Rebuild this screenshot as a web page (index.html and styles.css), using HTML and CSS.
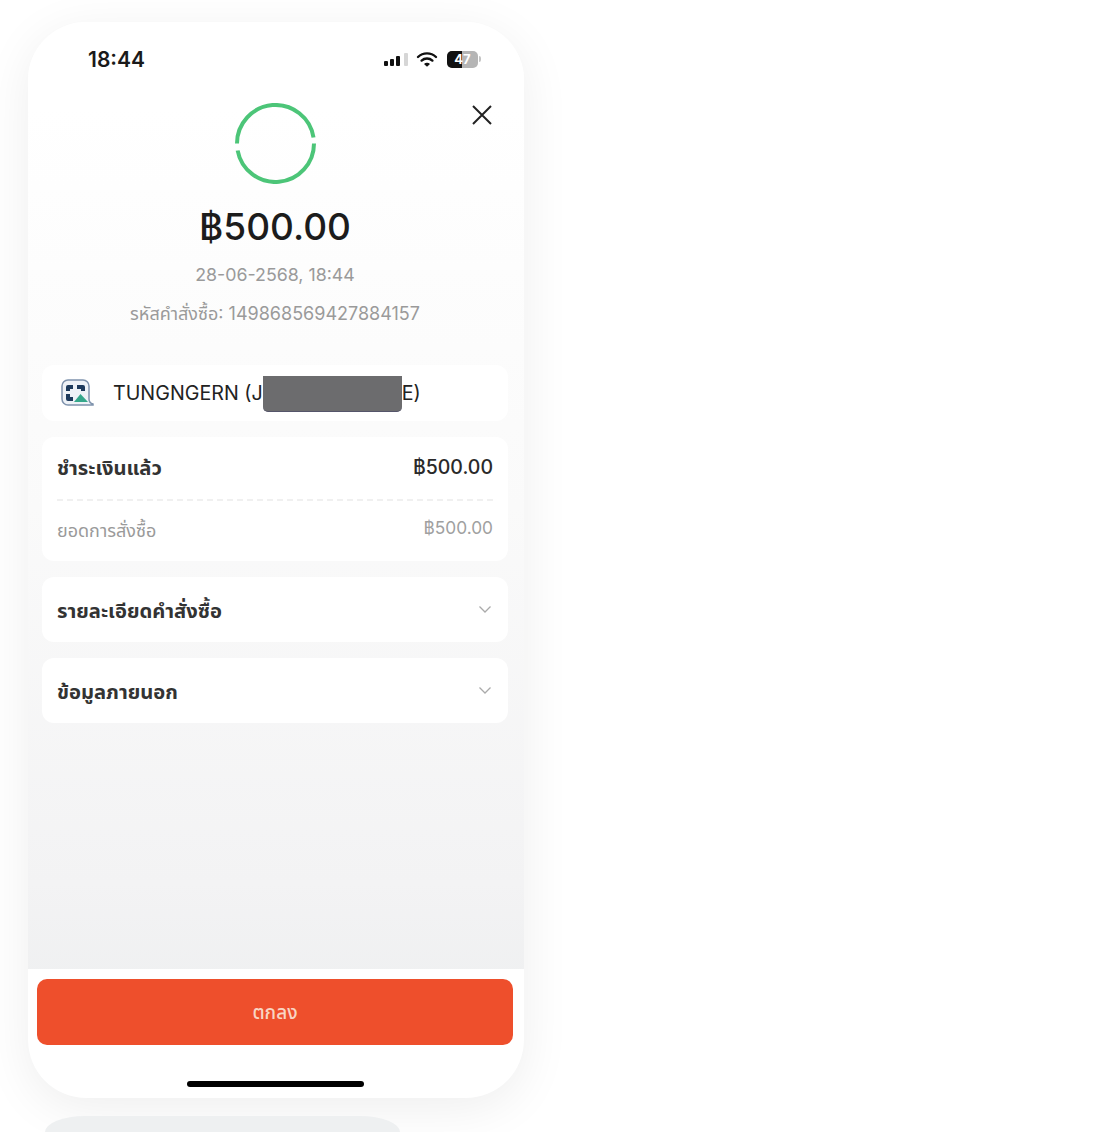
FILE: index.html
```html
<!DOCTYPE html>
<html lang="th">
<head>
  <meta charset="UTF-8">
  <title>ชำระเงินแล้ว</title>
  <link rel="stylesheet" href="styles.css">
</head>
<body>

  <div class="phone">
    <div class="screen">

      <!-- Status bar -->
      <div class="status-bar">
        <span class="clock">18:44</span>
        <div class="status-icons">
          <svg class="signal" width="26" height="16" viewBox="0 0 26 16">
            <rect x="0" y="10" width="4" height="5" rx="1" fill="#111"/>
            <rect x="6" y="8" width="4" height="7" rx="1" fill="#111"/>
            <rect x="12" y="5" width="4" height="10" rx="1" fill="#111"/>
            <rect x="20" y="2" width="4" height="13" rx="1" fill="#d6d6d6"/>
          </svg>
          <svg class="wifi" width="22" height="16" viewBox="0 0 22 16">
            <path d="M2 6 a13 13 0 0 1 18 0" fill="none" stroke="#111" stroke-width="2.4" stroke-linecap="round"/>
            <path d="M5.6 9.6 a8 8 0 0 1 10.8 0" fill="none" stroke="#111" stroke-width="2.4" stroke-linecap="round"/>
            <path d="M8 13 L11 15.8 L14 13 a4 4 0 0 0 -6 0 Z" fill="#111"/>
          </svg>
          <div class="battery">
            <div class="battery-level"></div>
            <span class="battery-num">47</span>
          </div>
          <div class="battery-cap"></div>
        </div>
      </div>

      <!-- Header -->
      <div class="summary">
        <svg class="close" width="22" height="22" viewBox="0 0 22 22">
          <path d="M2 2 L20 20 M20 2 L2 20" stroke="#222" stroke-width="2" fill="none"/>
        </svg>
        <svg class="ring" width="81" height="81" viewBox="0 0 81 81">
          <path d="M78.53 34.5 A38.5 38.5 0 0 0 2 40.5" fill="none" stroke="#4cc578" stroke-width="4"/>
          <path d="M79 40.5 A38.5 38.5 0 0 1 2.64 47.5" fill="none" stroke="#4cc578" stroke-width="4"/>
        </svg>
        <div class="amount">฿500.00</div>
        <div class="meta">28-06-2568, 18:44</div>
        <div class="meta order-no">รหัสคำสั่งซื้อ: 149868569427884157</div>
      </div>

      <!-- Cards -->
      <div class="cards">
        <div class="card shop">
          <svg class="shop-logo" width="36" height="30" viewBox="0 0 36 30">
            <path d="M9 2 H24 a6 6 0 0 1 6 6 V21 q0 4 4 5 V27 H9 a6 6 0 0 1 -6 -6 V8 a6 6 0 0 1 6 -6 Z" fill="#eef2f7" stroke="#7f93ad" stroke-width="1.5"/>
            <path d="M7 13 V9 a2 2 0 0 1 2 -2 H14 V11 H11 V13 Z M18 7 H24 a2 2 0 0 1 2 2 V13 H22 V11 H18 Z M7 16 H11 V19 H14 V23 H9 a2 2 0 0 1 -2 -2 Z" fill="#1d3a5c"/>
            <path d="M15 24 L21.500 16 L29 24 Z" fill="#35a78b"/>
          </svg>
          <span class="shop-name">TUNGNGERN (J<span class="redacted"></span>E)</span>
        </div>

        <div class="card paid">
          <div class="row paid-row">
            <span class="label">ชำระเงินแล้ว</span>
            <span class="value">฿500.00</span>
          </div>
          <div class="row total-row">
            <span class="label-sub">ยอดการสั่งซื้อ</span>
            <span class="value-sub">฿500.00</span>
          </div>
        </div>

        <div class="card fold">
          <span class="label">รายละเอียดคำสั่งซื้อ</span>
          <svg class="chevron" width="14" height="9" viewBox="0 0 14 9">
            <path d="M1.5 1.5 L7 7 L12.500 1.5" fill="none" stroke="#aaa" stroke-width="1.3"/>
          </svg>
        </div>

        <div class="card fold">
          <span class="label">ข้อมูลภายนอก</span>
          <svg class="chevron" width="14" height="9" viewBox="0 0 14 9">
            <path d="M1.5 1.5 L7 7 L12.500 1.5" fill="none" stroke="#aaa" stroke-width="1.3"/>
          </svg>
        </div>
      </div>

      <!-- Bottom button -->
      <div class="footer">
        <button type="button" class="ok-btn">ตกลง</button>
        <div class="home-bar"></div>
      </div>

    </div>
  </div>

  <div class="next-phone"></div>

</body>
</html>
```

FILE: styles.css
```css
* {
  box-sizing: border-box;
}

body {
  margin: 0;
  padding: 22px 0 0 28px;
  height: 1132px;
  overflow: hidden;
  background: white;
  font-family: "Inter", "Noto Sans", "Noto Sans Thai", sans-serif;
  color: #222;
}

.phone {
  width: 496px;
  height: 1076px;
  border-radius: 58px;
  background: white;
  box-shadow: 0 10px 50px rgba(0,0,0,0.07);
  overflow: hidden;
}

.screen {
  height: 100%;
  display: flex;
  flex-direction: column;
  background: linear-gradient(#ffffff 8%, #fafafa 45%, #f3f3f4 80%, #eeeff0 92%);
}

.status-bar {
  display: flex;
  justify-content: space-between;
  align-items: center;
  height: 28px;
  margin-top: 23px;
  padding: 0 43px 0 60px;
}

.clock {
  font-size: 21px;
  font-weight: 600;
  color: #1a1a1a;
}

.status-icons {
  display: flex;
  align-items: center;
  gap: 6px;
}

.wifi {
  margin-right: 3px;
}

.battery {
  position: relative;
  width: 31px;
  height: 17px;
  border-radius: 5px;
  background: #b5b5b5;
  overflow: hidden;
  display: flex;
  align-items: center;
  justify-content: center;
}

.battery-level {
  position: absolute;
  left: 0;
  top: 0;
  bottom: 0;
  width: 15px;
  background: #111;
}

.battery-num {
  position: relative;
  font-size: 13px;
  font-weight: 700;
  color: white;
}

.battery-cap {
  width: 2px;
  height: 6px;
  margin-left: -5px;
  background: #c4c4c4;
  border-radius: 0 2px 2px 0;
}

.summary {
  position: relative;
  display: flex;
  flex-direction: column;
  align-items: center;
  padding: 30px 2px 0 0;
  height: 292px;
}

.close {
  position: absolute;
  top: 31px;
  right: 31px;
}

.ring {
  display: block;
}

.amount {
  margin-top: 19px;
  font-size: 37px;
  line-height: 48px;
  font-weight: 500;
  color: #1c1c1c;
}

.meta {
  margin-top: 12px;
  font-size: 17.8px;
  line-height: 24px;
  color: #9a9a9a;
}

.order-no {
  margin-top: 15px;
  font-size: 18px;
}

.cards {
  flex: 1;
  display: flex;
  flex-direction: column;
  gap: 16px;
  padding: 0 16px 0 14px;
}

.card {
  background: white;
  border-radius: 12px;
}

.shop {
  display: flex;
  align-items: center;
  height: 56px;
  padding-left: 17px;
}

.shop-logo {
  flex-shrink: 0;
  margin-right: 18px;
}

.shop-name {
  display: flex;
  align-items: center;
  font-size: 19.7px;
  color: #222;
}

.redacted {
  width: 139px;
  height: 36px;
  margin-top: 1px;
  background: #6c6c6e;
  border-bottom: 1px solid #55556a;
  border-radius: 0 0 5px 5px;
}

.paid {
  height: 124px;
  padding: 0 15px;
}

.row {
  display: flex;
  justify-content: space-between;
  align-items: center;
}

.paid-row {
  height: 64px;
  padding-bottom: 2px;
  border-bottom: 2px dashed #f0f0f0;
}

.total-row {
  height: 58px;
}

.label {
  padding-top: 3px;
  font-size: 20.2px;
  font-weight: 700;
  color: #333;
}

.fold .label {
  padding-top: 5px;
}

.value {
  font-size: 19.5px;
  font-weight: 500;
  color: #2a2a2a;
}

.label-sub {
  padding-top: 2px;
  font-size: 18px;
  color: #9a9a9a;
}

.value-sub {
  margin-bottom: 6px;
  font-size: 17.3px;
  color: #a0a0a0;
}

.fold {
  display: flex;
  justify-content: space-between;
  align-items: center;
  height: 65px;
  padding: 0 16px 0 15px;
}

.footer {
  height: 129px;
  padding: 10px 11px 0 9px;
  background: white;
  display: flex;
  flex-direction: column;
  align-items: center;
}

.ok-btn {
  width: 100%;
  height: 66px;
  padding-top: 4px;
  border: none;
  border-radius: 10px;
  background: #ee4f2c;
  color: #f8d5c4;
  font-family: inherit;
  font-size: 19px;
  font-weight: 500;
}

.home-bar {
  width: 177px;
  height: 6px;
  margin-top: 36px;
  border-radius: 3px;
  background: black;
}

.next-phone {
  width: 355px;
  height: 16px;
  margin: 18px 0 0 17px;
  border-radius: 40px 40px 0 0 / 16px 16px 0 0;
  background: #eef0f1;
}
```
